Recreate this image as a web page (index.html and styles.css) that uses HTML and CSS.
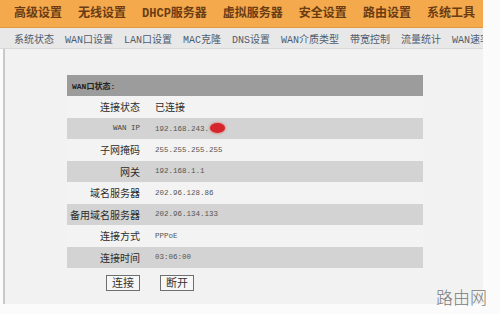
FILE: index.html
```html
<!DOCTYPE html>
<html lang="zh-CN">
<head>
<meta charset="utf-8">
<title>WAN口状态</title>
<link rel="stylesheet" href="styles.css">
</head>
<body>
<div class="page">
  <nav class="topnav">
    <span class="top-item active">高级设置</span>
    <span class="top-item">无线设置</span>
    <span class="top-item">DHCP服务器</span>
    <span class="top-item">虚拟服务器</span>
    <span class="top-item">安全设置</span>
    <span class="top-item">路由设置</span>
    <span class="top-item">系统工具</span>
  </nav>
  <nav class="subnav">
    <span class="sub-item">系统状态</span>
    <span class="sub-item">WAN口设置</span>
    <span class="sub-item">LAN口设置</span>
    <span class="sub-item">MAC克隆</span>
    <span class="sub-item">DNS设置</span>
    <span class="sub-item">WAN介质类型</span>
    <span class="sub-item">带宽控制</span>
    <span class="sub-item">流量统计</span>
    <span class="sub-item">WAN速率</span>
  </nav>
  <main class="content">
    <table class="status">
      <tr class="head"><td colspan="2">WAN口状态:</td></tr>
      <tr class="light"><td class="lbl">连接状态</td><td class="val cn">已连接</td></tr>
      <tr class="dark"><td class="lbl en">WAN IP</td><td class="val">192.168.243.<span class="blot"></span></td></tr>
      <tr class="light"><td class="lbl">子网掩码</td><td class="val">255.255.255.255</td></tr>
      <tr class="dark"><td class="lbl">网关</td><td class="val">192.168.1.1</td></tr>
      <tr class="light"><td class="lbl">域名服务器</td><td class="val">202.96.128.86</td></tr>
      <tr class="dark"><td class="lbl">备用域名服务器</td><td class="val">202.96.134.133</td></tr>
      <tr class="light"><td class="lbl">连接方式</td><td class="val">PPPoE</td></tr>
      <tr class="dark"><td class="lbl">连接时间</td><td class="val">03:06:00</td></tr>
      <tr class="btns"><td class="btn-left"><button class="btn">连接</button></td><td class="btn-right"><button class="btn">断开</button></td></tr>
    </table>
  </main>
</div>
<div class="watermark">路由网</div>
</body>
</html>
```

FILE: styles.css
```css
html, body {
  margin: 0;
  padding: 0;
}
body {
  width: 500px;
  height: 314px;
  overflow: hidden;
  background: #fbfbfb;
  position: relative;
  font-family: "Noto Sans CJK SC", sans-serif;
}
.page {
  width: 483px;
}
.topnav {
  height: 28px;
  box-sizing: border-box;
  background: #f4a94c;
  border-bottom: 1px solid #e39a3e;
  display: flex;
  align-items: center;
  gap: 16px;
  padding-left: 14px;
  font-family: "Liberation Mono", "Noto Sans CJK SC", monospace;
  font-size: 12px;
  font-weight: bold;
  color: #6b3c14;
  white-space: nowrap;
  overflow: hidden;
}
.top-item {
  position: relative;
  line-height: 14px;
}
.top-item.active::after {
  content: "";
  position: absolute;
  left: 21px;
  top: 20px;
  border-left: 4px solid transparent;
  border-right: 4px solid transparent;
  border-top: 4px solid #e8a250;
}
.subnav {
  height: 20px;
  background: #e8e8e8;
  border-bottom: 1px solid #d8d8d8;
  display: flex;
  align-items: center;
  gap: 11px;
  padding-left: 14px;
  font-family: "Liberation Mono", "Noto Sans CJK SC", monospace;
  font-size: 10px;
  color: #4f5c70;
  white-space: nowrap;
  overflow: hidden;
}
.content {
  display: block;
  margin-left: 3px;
  height: 255px;
  box-sizing: border-box;
  background: #f2f2f2;
  border-left: 2px solid #c9c9c9;
  padding: 26px 0 0 62px;
}
.status {
  width: 356px;
  border-collapse: collapse;
}
.status td {
  padding: 0;
  height: 21.5px;
}
.head td {
  height: 21px;
  background: #9c9c9c;
  font-family: "Liberation Mono", "Noto Sans CJK SC", monospace;
  font-size: 8px;
  font-weight: bold;
  color: #222;
  padding-left: 5px;
}
.light td {
  background: #f3f3f3;
}
.dark td {
  background: #d3d3d3;
}
.lbl {
  width: 73px;
  text-align: right;
  font-size: 10px;
  color: #2c2c2c;
}
.lbl.en {
  font-family: "Liberation Mono", monospace;
  font-size: 7.5px;
  color: #444;
}
.val {
  padding-left: 15px !important;
  font-family: "Liberation Mono", "Noto Sans CJK SC", monospace;
  font-size: 7.5px;
  color: #555;
}
.val.cn {
  font-family: "Noto Sans CJK SC", sans-serif;
  font-size: 10px;
  color: #2c2c2c;
}
.blot {
  display: inline-block;
  width: 15px;
  height: 10px;
  margin-left: 1px;
  vertical-align: -2px;
  border-radius: 50%;
  background: #d4262b;
  box-shadow: 0 0 2px 1px rgba(230, 80, 80, 0.5);
}
.btns td {
  height: 21px;
  background: transparent;
}
.btn-left {
  text-align: right;
}
.btn-right {
  padding-left: 20px !important;
}
.btn {
  width: 34px;
  height: 16px;
  padding: 0;
  margin: 0;
  border: 1px solid #6f6f6f;
  background: #f7f7f7;
  font-family: "Noto Sans CJK SC", sans-serif;
  font-size: 11px;
  line-height: 13px;
  color: #333;
  vertical-align: middle;
}
.watermark {
  position: absolute;
  left: 436px;
  top: 286px;
  font-family: "Noto Sans CJK SC", sans-serif;
  font-weight: 300;
  font-size: 17px;
  line-height: 22px;
  color: #7a7a7a;
  letter-spacing: 0;
}
```
